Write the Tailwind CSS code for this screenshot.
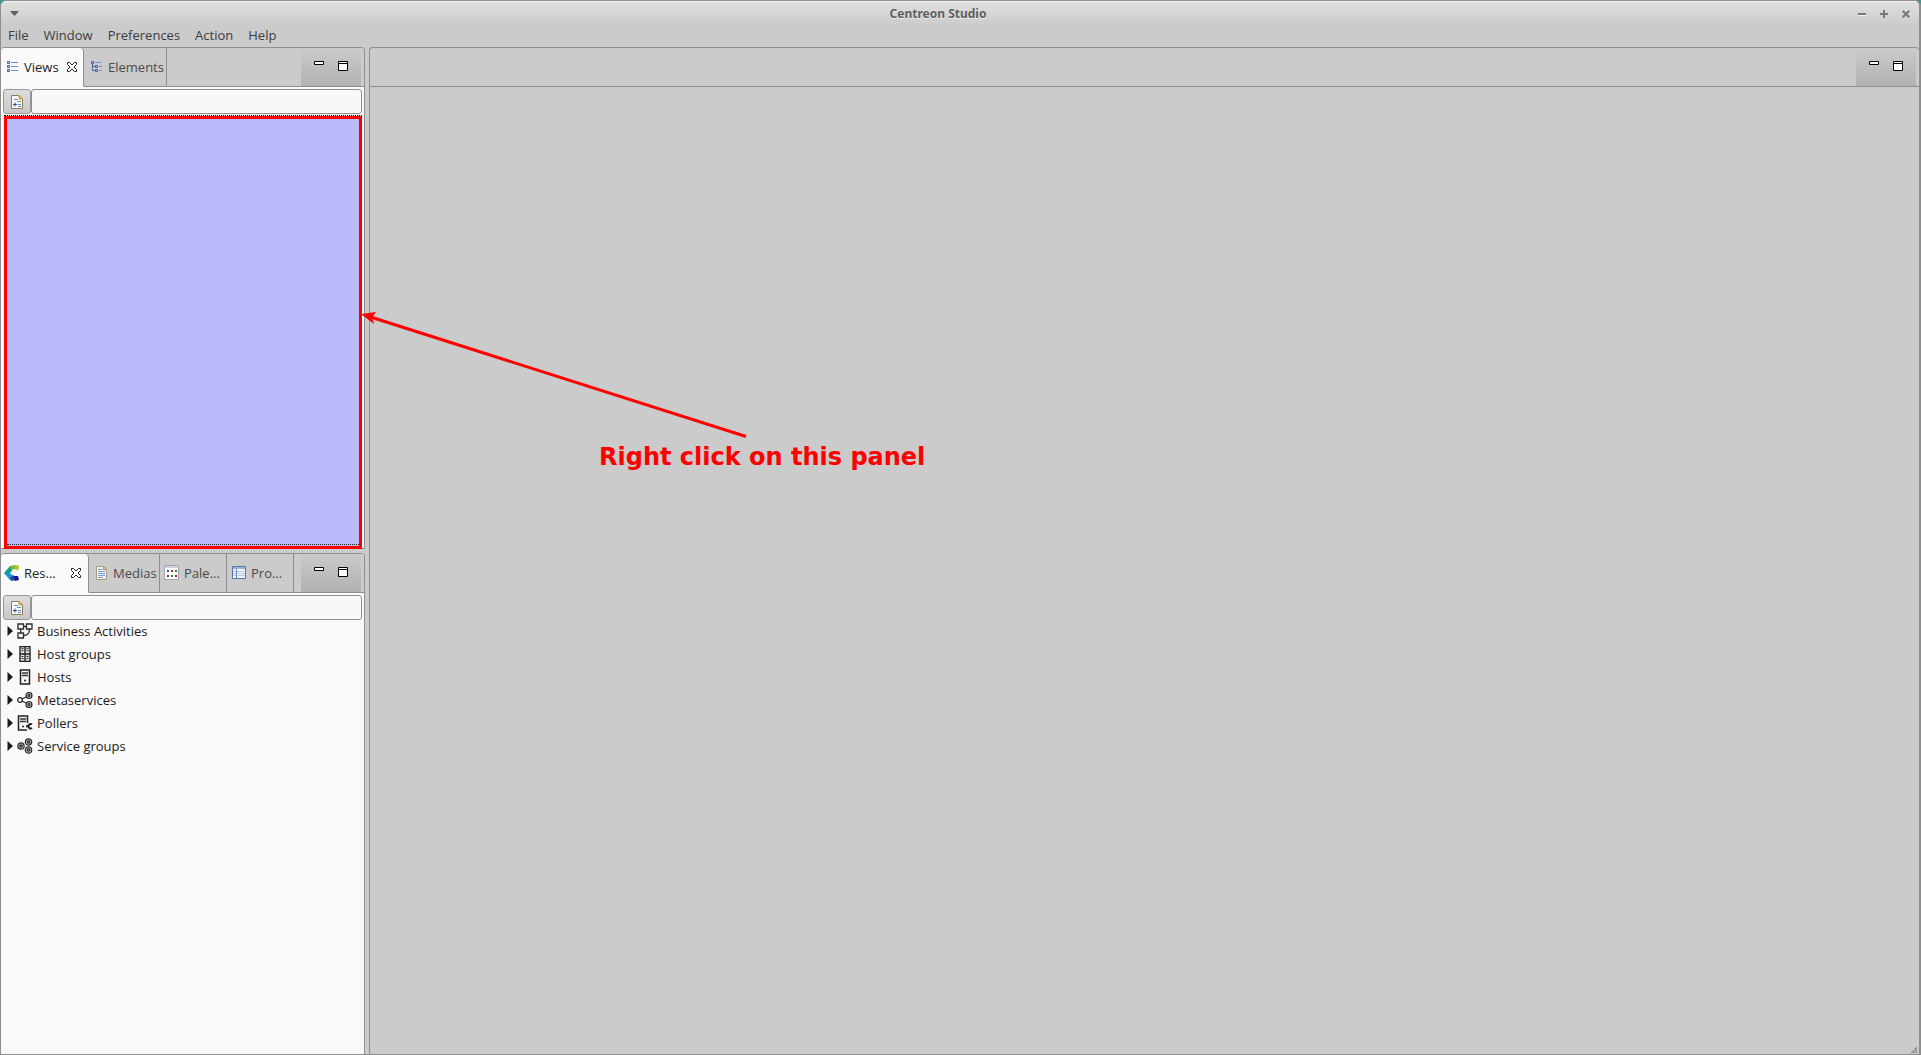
<!DOCTYPE html>
<html lang="en">
<head>
<meta charset="utf-8">
<title>Centreon Studio</title>
<script src="https://cdn.jsdelivr.net/npm/@tailwindcss/browser@4"></script>
</head>
<body class="bg-[#39978f]">
<svg class="hidden">
  <symbol id="close" viewBox="0 0 12 12"><path d="M1.5 1.5h2L6 4l2.500-2.500h2v2L8 6l2.500 2.500v2h-2L6 8l-2.500 2.500h-2v-2L4 6 1.500 3.500z" fill="#fafafa" stroke="#222"/></symbol>
  <symbol id="min" viewBox="0 0 10 10"><path d="M.5.5h9v3h-9z" fill="#fff" stroke="#000"/></symbol>
  <symbol id="max" viewBox="0 0 10 10"><path d="M.5.5h9v9h-9zM1 2.500h8" fill="#fff" stroke="#000"/></symbol>
  <symbol id="filter" viewBox="0 0 14 16"><path d="M1.500 1.500h7.500l3.500 3.500v9.500h-11z" fill="#f5f9fe" stroke="#8d7c53"/><path d="M9 1.500v3.500h3.500z" fill="#edc765" stroke="#c19a3d"/><path d="M3 10.500h4M5 8.500v4" stroke="#35557e"/><path d="M4 5.500h4M7 7.500h4M8 10.500h3M8 12.500h3" stroke="#6b8cb8"/></symbol>
  <symbol id="arrow" viewBox="0 0 6 10"><path d="M.5 0v10L6 5z" fill="#1b1b1b"/></symbol>
</svg>
<div class="relative flex h-screen flex-col overflow-hidden rounded-t-md border border-r-2 border-[#8e8e8e] bg-[#cbcbcb] font-['Open_Sans','Noto_Sans',sans-serif] text-[13px] leading-5 text-[#3c3c3c]">

  <header class="flex h-6 shrink-0 items-center border-t border-[#f4f4f4] bg-linear-to-b from-[#e0e0e0] to-[#cbcbcb] pr-[9px] pl-[9px]">
    <button aria-label="Window menu" class="flex h-5 w-5 items-center"><svg class="h-[6px] w-[9px]" viewBox="0 0 9 6"><path d="M0 0h9L4.500 5z" fill="#5e5e5e"/></svg></button>
    <h1 class="flex-1 pr-3 text-center font-['Noto_Sans',sans-serif] text-xs font-bold text-[#5e5e5e] [text-shadow:0_1px_0_#eee]">Centreon Studio</h1>
    <div class="flex gap-[14px] text-[#777]">
      <button aria-label="Minimize"><svg class="size-2" viewBox="0 0 8 8"><path d="M0 4h8" stroke="currentColor" stroke-width="2"/><path d="M0 5.500h8" stroke="#eee"/></svg></button>
      <button aria-label="Maximize"><svg class="size-2" viewBox="0 0 8 8"><path d="M0 4h8M4 0v8" stroke="currentColor" stroke-width="2"/></svg></button>
      <button aria-label="Close"><svg class="size-2" viewBox="0 0 8 8"><path d="M.7.7l6.600 6.600M7.300.7L.7 7.300" stroke="currentColor" stroke-width="2"/></svg></button>
    </div>
  </header>

  <nav class="flex h-[22px] shrink-0 items-start gap-[15px] pl-[7px]">
    <button>File</button><button>Window</button><button>Preferences</button><button>Action</button><button>Help</button>
  </nav>

  <div class="grid min-h-0 flex-1 grid-cols-[364px_1fr] gap-x-1">
    <div class="flex min-h-0 flex-col gap-1">

      <section class="flex min-h-0 flex-1 flex-col rounded-t border-t border-r border-b border-[#8e8e8e] bg-[#f9f9f9]">
        <div class="flex h-[39px] shrink-0 rounded-t bg-[#cbcbcb]">
          <button class="flex w-[83px] items-center rounded-t border-r border-b border-[#8e8e8e] border-b-[#fafafa] bg-[#fafafa] pl-[6px] text-[#222]">
            <svg class="size-3 shrink-0" viewBox="0 0 12 12"><path d="M.5.5h2v2h-2zM.5 4.500h2v2h-2zM.5 8.500h2v2h-2z" fill="#b5c8e4" stroke="#4667a3"/><path d="M4 1.500h7M4 5.500h7M4 9.500h7" stroke="#6e8ec4"/></svg>
            <span class="ml-[5px]">Views</span>
            <svg class="ml-[7px] size-3 shrink-0"><use href="#close"/></svg>
          </button>
          <button class="flex w-[83px] items-center border-r border-b border-[#8e8e8e] pl-[7px] text-[#4a4a4a]">
            <svg class="size-3 shrink-0" viewBox="0 0 12 12"><path d="M1.500 3v6.500H5M2 5.500h3" fill="none" stroke="#4667a3"/><path d="M.5.5h2v2h-2zM4.500 4.500h2v2h-2zM4.500 8.500h2v2h-2z" fill="#b5c8e4" stroke="#4667a3"/><path d="M4 1.500h6M8 5.500h3M8 9.500h3" stroke="#6e8ec4"/></svg>
            <span class="ml-[5px]">Elements</span>
          </button>
          <div class="flex flex-1 justify-end border-b border-[#8e8e8e] pr-[3px]">
            <div class="flex w-[60px] gap-[14px] bg-linear-to-b from-[#cbcbcb] to-[#b1b1b1] pt-[13px] pl-[13px]">
              <button aria-label="Minimize views" class="size-[10px]"><svg class="size-[10px]"><use href="#min"/></svg></button>
              <button aria-label="Maximize views" class="size-[10px]"><svg class="size-[10px]"><use href="#max"/></svg></button>
            </div>
          </div>
        </div>
        <div class="flex shrink-0 pt-[2px] pr-[2px] pb-px pl-[2px]">
          <button aria-label="Filter views" class="flex h-[25px] w-7 items-center justify-center rounded-[3px] border border-[#999] bg-linear-to-b from-[#ddd] to-[#c8c8c8]"><svg class="h-4 w-[14px]"><use href="#filter"/></svg></button>
          <input aria-label="Search views" class="h-[25px] min-w-0 flex-1 rounded-[3px] border border-[#8e8e8e] bg-[#f8f8f8] px-1">
        </div>
        <div class="mr-[2px] ml-[3px] border-t border-dotted border-black"></div>
        <div class="mr-[2px] -mb-px ml-[3px] flex min-h-0 flex-1 flex-col justify-end border-3 border-[#f00] bg-[#bbbbfc] pb-px"><div class="border-t border-dotted border-[#222]"></div></div>
      </section>

      <section class="flex min-h-0 flex-1 flex-col rounded-t border-t border-r border-[#8e8e8e] bg-[#f9f9f9]">
        <div class="flex h-[39px] shrink-0 rounded-t bg-[#cbcbcb]">
          <button class="flex w-[88px] items-center rounded-t border-r border-b border-[#8e8e8e] border-b-[#fafafa] bg-[#fafafa] pl-[3px] text-[#222]">
            <svg class="size-4 shrink-0" viewBox="0 0 16 16"><path d="M6 1l5-1 4 1-1 4-4-1-3 2z" fill="#7eb928"/><path d="M11 0l4 1-1 4-3-1z" fill="#a6ce22"/><path d="M6 1l2 5-2 2H0z" fill="#16a08a"/><path d="M0 8h6l2 2-3 4z" fill="#1598d5"/><path d="M5 14l3-4 3 1 1 4-4 1z" fill="#1853b0"/><path d="M10 11h4l1 4-4 1z" fill="#1a1195"/></svg>
            <span class="ml-1">Res...</span>
            <svg class="ml-[14px] size-3 shrink-0"><use href="#close"/></svg>
          </button>
          <button class="flex w-[71px] items-center border-r border-b border-[#8e8e8e] pl-[7px] text-[#4a4a4a]">
            <svg class="h-[14px] w-3 shrink-0" viewBox="0 0 12 14"><path d="M.5.5h7l3 3v10h-10z" fill="#eaf1fa" stroke="#a99c7a"/><path d="M7.500.5v3h3z" fill="#e5c268" stroke="#b99a4a"/><path d="M2 3.500h4M2 5.500h7M2 7.500h7M2 9.500h7M2 11.500h5" stroke="#7d9cca"/></svg>
            <span class="ml-[5px]">Medias</span>
          </button>
          <button class="flex w-[67px] items-center border-r border-b border-[#8e8e8e] pl-1 text-[#4a4a4a]">
            <svg class="size-4 shrink-0" viewBox="0 0 16 16"><path d="M.5.500h14v14H.5z" fill="#fff" stroke="#aaa2b4"/><path d="M1 1h13v2H1z" fill="#d6d0dc"/><path d="M3 5h2v2H3z" fill="#26539b"/><path d="M7 5h2v2H7z" fill="#cb2531"/><path d="M11 5h2v2h-2z" fill="#368a3a"/><path d="M3 10h2v2H3z" fill="#67491e"/><path d="M7 10h2v2H7z" fill="#31865a"/><path d="M11 10h2v2h-2z" fill="#9b2846"/></svg>
            <span class="ml-1">Pale...</span>
          </button>
          <button class="flex w-[67px] items-center border-r border-b border-[#8e8e8e] pl-[5px] text-[#4a4a4a]">
            <svg class="h-[14px] w-[14px] shrink-0" viewBox="0 0 14 14"><path d="M.5.500h13v12H.5z" fill="#f1f5fb" stroke="#5775a9"/><path d="M1 1h12v2H1z" fill="#9db4d8"/><path d="M1 5.500h12M1 7.500h12M1 9.500h12" stroke="#c2cbdc"/><path d="M4.500 3v9" stroke="#7189b4"/></svg>
            <span class="ml-[5px]">Pro...</span>
          </button>
          <div class="flex flex-1 justify-end border-b border-[#8e8e8e] pr-[3px]">
            <div class="flex w-[60px] gap-[14px] bg-linear-to-b from-[#cbcbcb] to-[#b1b1b1] pt-[13px] pl-[13px]">
              <button aria-label="Minimize resources" class="size-[10px]"><svg class="size-[10px]"><use href="#min"/></svg></button>
              <button aria-label="Maximize resources" class="size-[10px]"><svg class="size-[10px]"><use href="#max"/></svg></button>
            </div>
          </div>
        </div>
        <div class="flex shrink-0 pt-[2px] pr-[2px] pl-[2px]">
          <button aria-label="Filter resources" class="flex h-[25px] w-7 items-center justify-center rounded-[3px] border border-[#999] bg-linear-to-b from-[#ddd] to-[#c8c8c8]"><svg class="h-4 w-[14px]"><use href="#filter"/></svg></button>
          <input aria-label="Search resources" class="h-[25px] min-w-0 flex-1 rounded-[3px] border border-[#8e8e8e] bg-[#f8f8f8] px-1">
        </div>
        <ul class="-mt-px text-[#1b1b1b]">
          <li class="flex h-[23px] items-center pl-[6px]"><svg class="mr-1 h-[10px] w-[6px]"><use href="#arrow"/></svg>
            <svg class="mr-1 size-4" viewBox="0 0 16 16" fill="none" stroke="#2b2b2b" stroke-width="1.300"><path d="M1 1h5.500v5H1zM9.500 1H15v5H9.500zM1 10h5.500v5H1zM6.500 3.500h3M3.700 6v4M12.500 6c0 4-2 6.500-6 6.500"/></svg>Business Activities</li>
          <li class="flex h-[23px] items-center pl-[6px]"><svg class="mr-1 h-[10px] w-[6px]"><use href="#arrow"/></svg>
            <svg class="mr-1 size-4" viewBox="0 0 16 16"><path d="M3 .5h10v15H3z" fill="#ddd" stroke="#222" stroke-width="1.400"/><path d="M8 0v16M3 8h10" stroke="#222" stroke-width="1.400"/><path d="M4.500 2.500h2M4.500 4.500h2M9.500 2.500h2M9.500 4.500h2M4.500 10.500h2M4.500 12.500h2M9.500 10.500h2M9.500 12.500h2" stroke="#333"/></svg>Host groups</li>
          <li class="flex h-[23px] items-center pl-[6px]"><svg class="mr-1 h-[10px] w-[6px]"><use href="#arrow"/></svg>
            <svg class="mr-1 size-4" viewBox="0 0 16 16"><path d="M3.500 1h9v14h-9z" fill="#f5f5f5" stroke="#222" stroke-width="1.500"/><path d="M5 4h6M5 6.500h6" stroke="#333" stroke-width="1.300"/><circle cx="8" cy="11.500" r="1" fill="#222"/></svg>Hosts</li>
          <li class="flex h-[23px] items-center pl-[6px]"><svg class="mr-1 h-[10px] w-[6px]"><use href="#arrow"/></svg>
            <svg class="mr-1 size-4" viewBox="0 0 16 16" fill="none" stroke="#2b2b2b" stroke-width="1.300"><circle cx="3" cy="8" r="2.300"/><circle cx="12" cy="3.500" r="2.900"/><circle cx="12" cy="3.500" r="1"/><circle cx="12" cy="12.500" r="2.900"/><circle cx="12" cy="12.500" r="1"/><path d="M5 7l4-2M5 9l4 2"/></svg>Metaservices</li>
          <li class="flex h-[23px] items-center pl-[6px]"><svg class="mr-1 h-[10px] w-[6px]"><use href="#arrow"/></svg>
            <svg class="mr-1 size-4" viewBox="0 0 16 16"><path d="M10 15H1.500V1h9v7" fill="#f5f5f5" stroke="#222" stroke-width="1.500"/><path d="M3 4h6M3 6.500h6" stroke="#333" stroke-width="1.300"/><circle cx="6" cy="11.500" r="1" fill="#222"/><path d="M15 9.500a2.200 2.200 0 1 0 0 3.500M9 11.200h3" fill="none" stroke="#222" stroke-width="2"/></svg>Pollers</li>
          <li class="flex h-[23px] items-center pl-[6px]"><svg class="mr-1 h-[10px] w-[6px]"><use href="#arrow"/></svg>
            <svg class="mr-1 size-4" viewBox="0 0 16 16" fill="#bbb" stroke="#2b2b2b" stroke-width="1.200"><circle cx="4" cy="8" r="3.200"/><circle cx="4" cy="8" r="1.200"/><circle cx="11.500" cy="4" r="3.200"/><circle cx="11.500" cy="4" r="1.200"/><circle cx="11.500" cy="12" r="3.200"/><circle cx="11.500" cy="12" r="1.200"/></svg>Service groups</li>
        </ul>
      </section>
    </div>

    <main class="flex min-h-0 flex-col rounded-t border-t border-l border-[#8e8e8e]">
      <div class="flex h-[39px] shrink-0 justify-end border-b border-[#8e8e8e] pr-[3px]">
        <div class="flex w-[60px] gap-[14px] bg-linear-to-b from-[#cbcbcb] to-[#b1b1b1] pt-[13px] pl-[13px]">
          <button aria-label="Minimize editor" class="size-[10px]"><svg class="size-[10px]"><use href="#min"/></svg></button>
          <button aria-label="Maximize editor" class="size-[10px]"><svg class="size-[10px]"><use href="#max"/></svg></button>
        </div>
      </div>
      <div class="flex flex-1 items-end justify-end pr-[2px] pb-px"><svg class="size-[6px]" viewBox="0 0 6 6"><path d="M6 0v6H0z" fill="#aaa" stroke="#888"/></svg></div>
    </main>
  </div>

  <svg class="pointer-events-none absolute top-[306px] left-[360px] h-[136px] w-[392px]" viewBox="0 0 392 136"><path d="M8 9.500L385 129.500" stroke="#f00" stroke-width="3"/><path d="M0 7l15-2-4 5.500 2 6.500z" fill="#f00"/></svg>
  <p class="absolute top-[440px] left-[598px] font-['DejaVu_Sans',sans-serif] text-2xl font-bold whitespace-nowrap text-[#f00]">Right click on this panel</p>
</div>
</body>
</html>
